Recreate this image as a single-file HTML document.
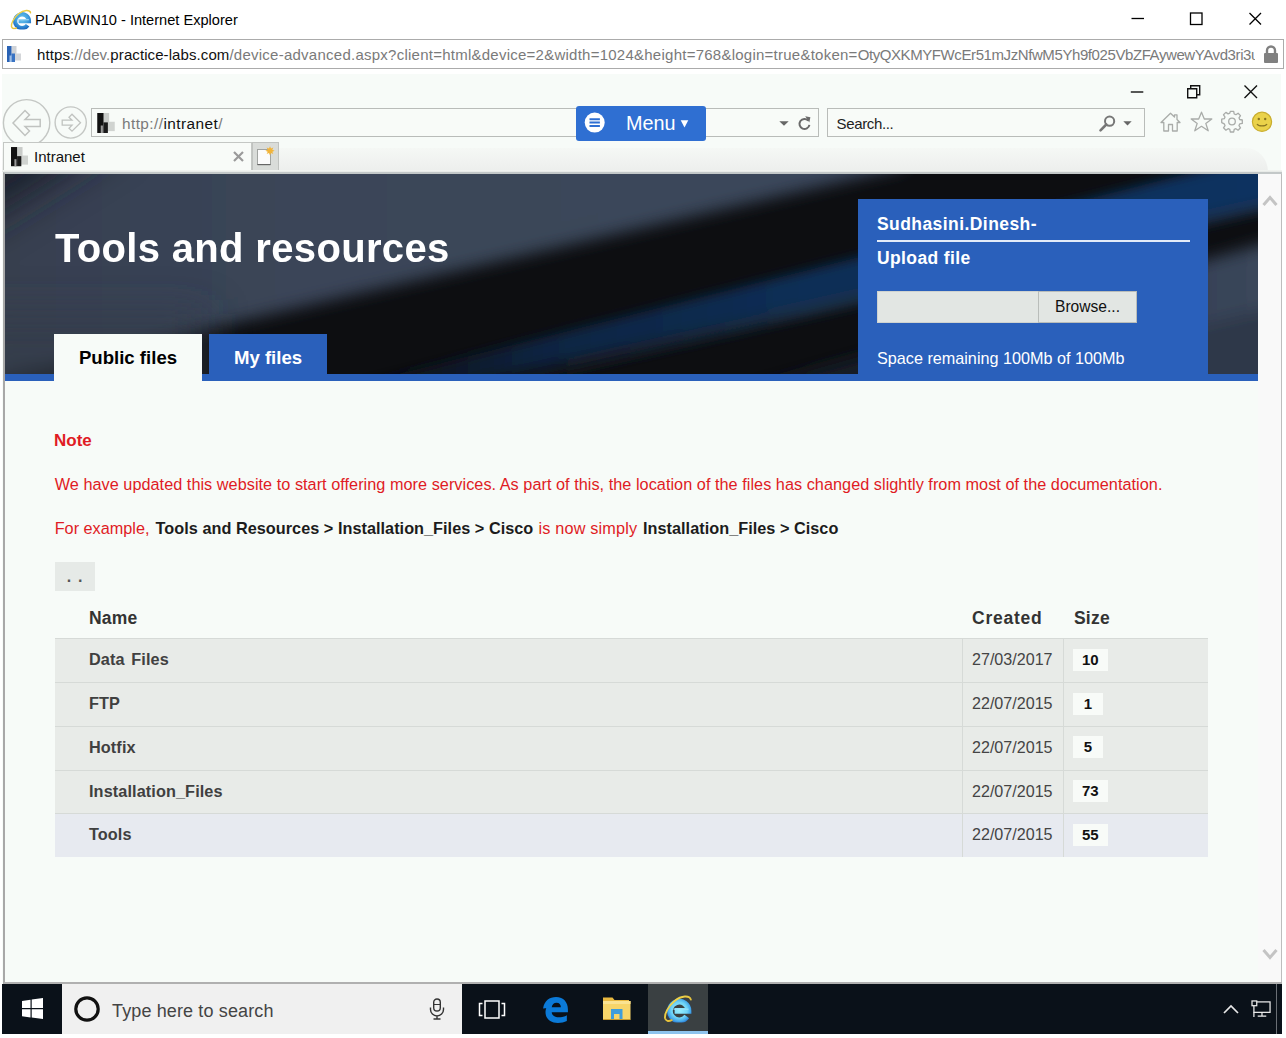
<!DOCTYPE html>
<html><head><meta charset="utf-8"><title>PLABWIN10 - Internet Explorer</title>
<style>
*{box-sizing:border-box;margin:0;padding:0}
html,body{width:1286px;height:1038px;overflow:hidden;background:#fff}
body{font-family:"Liberation Sans",sans-serif;position:relative}
.abs{position:absolute}
svg{position:absolute;overflow:visible}
/* outer window */
#otitle{left:35px;top:11px;font-size:14.6px;line-height:18px;color:#000;white-space:nowrap}
#oaddr{left:2px;top:39px;width:1282px;height:30px;border:1px solid #ababab;background:#fff}
#ourl{left:37px;top:45px;font-size:15px;line-height:20px;color:#7a7a7a;white-space:nowrap;width:1218px;overflow:hidden}
#ourl b{font-weight:normal;color:#111}
/* remote screen: origin (2,73) */
#rs{left:2px;top:73px;width:1280px;height:961px;background:#f7fbf8;overflow:hidden}
#tabrow{left:0;top:75px;width:1266px;height:24px;border-top-right-radius:22px 24px;background:linear-gradient(#f5f8f5 0%,#f1f3f1 50%,#eceeec 100%)}
#urlbox{left:89px;top:35px;width:728px;height:29px;border:1px solid #b9bcb9;background:#f8fbf8}
#urltxt{left:120px;top:41px;font-size:15.4px;letter-spacing:.42px;line-height:20px;color:#7a7a7a;white-space:nowrap}
#urltxt b{font-weight:normal;color:#111}
#menu{left:574px;top:33px;width:130px;height:35px;background:#2f6fd2;border-radius:3px;color:#fff;font-size:19.8px;line-height:34px;white-space:nowrap}
#searchbox{left:825px;top:35px;width:318px;height:29px;border:1px solid #b9bcb9;background:#f8fbf8}
#searchtxt{left:834.500px;top:41.300px;letter-spacing:-.35px;font-size:15px;line-height:20px;color:#222;white-space:nowrap}
#ietab{left:1px;top:69px;width:249px;height:28.500px;background:#f8fbf8;border:1px solid #c4c7c4;border-bottom:none}
#ietabtxt{left:32px;top:74px;font-size:15px;line-height:20px;color:#111;white-space:nowrap}
#newtab{left:249.500px;top:69px;width:27.500px;height:28px;background:#d9dcd9;border:1px solid #bfc2bf;border-bottom:none}
/* page: origin remote (2,99) => real (4,172) */
#page{left:1px;top:99px;width:1279px;height:812px;background:#f7fbf8;border-top:2px solid #c3c8c8;border-left:2px solid #a8a8a8;border-bottom:2px solid #b0b0b0}
#scroll{left:1253px;top:0;width:24px;height:808px;background:#f9f9f9;border-right:1.500px solid #bdbdbd}
#banner{left:0;top:0;width:1253px;height:207px;background:#0c0d10;overflow:hidden}
#bluestrip{left:0;top:200px;width:1253px;height:7px;background:#2a60bb}
#h1{left:50px;top:50.500px;font-size:40px;line-height:46px;font-weight:bold;color:#fff;white-space:nowrap;letter-spacing:.33px}
.tab{top:160px;height:40px;font-weight:bold;font-size:18.6px;text-align:center;line-height:48.6px;white-space:nowrap}
#tab1{left:49px;width:148px;height:47px;background:#f7fbf8;color:#000}
#tab2{left:204px;width:118px;background:#2a60bb;color:#fff}
#upl{left:853px;top:25px;width:350px;height:175px;background:#2a60bb;color:#fff}
#upl .u{position:absolute;left:19px;white-space:nowrap}
#uname{top:13.800px;font-size:17.5px;line-height:22px;font-weight:bold;letter-spacing:.43px}
#uhr{left:19px;top:40.900px;width:313px;height:1.700px;background:#e3ebf8}
#ufile{top:48.300px;font-size:17.5px;line-height:22px;font-weight:bold;letter-spacing:.38px}
#uinp{left:19px;top:92px;width:162px;height:32px;background:#e2e6e3;border:1px solid #cfd3d0}
#ubtn{left:180px;top:92px;width:99px;height:32px;background:#e2e6e3;border:1px solid #b9bdba;color:#111;font-size:15.6px;line-height:30px;text-align:center}
#uspace{top:149px;font-size:16.2px;line-height:20px}
.red{color:#e01b24}
.p{left:49px;font-size:16.25px;line-height:20px;white-space:nowrap}
.p b{color:#1c1c1c;font-size:16.25px}
#dots{left:49.600px;top:387.500px;width:40px;height:29px;background:#e6eae7;font-size:16px;font-weight:bold;color:#555;text-align:center;line-height:29px;letter-spacing:6.900px;padding-left:7px}
.th{top:432.600px;font-size:17.5px;line-height:22px;font-weight:bold;color:#333;white-space:nowrap;letter-spacing:.2px}
.row{left:49.500px;width:1153.500px;height:44.600px;overflow:hidden;background:#e8ebe8;border-top:1px solid #d6dad7}
.row.hl{background:#e7eaf0}
.row .n{position:absolute;left:34.500px;top:10px;font-size:16.25px;line-height:20px;font-weight:bold;color:#404040;white-space:nowrap;letter-spacing:.1px;word-spacing:2px}
.row .d{position:absolute;left:917.500px;top:10px;font-size:16.1px;line-height:20px;color:#444;white-space:nowrap}
.row .v1,.row .v2{position:absolute;left:907px;top:0;width:1px;height:44px;background:#d6dad7}
.row .v2{left:1008px}
.row .s{position:absolute;left:1018.500px;top:9.800px;height:22px;padding:0 9px;min-width:30px;text-align:center;background:#f8fbf8;font-size:15px;line-height:22px;font-weight:bold;color:#111}
#taskbar{left:0;top:911px;width:1280px;height:50px;background:#0a1119}
#tsearch{left:60px;top:0;width:400px;height:50px;background:#f0f0f0}
#tstxt{left:110px;top:15.500px;letter-spacing:.13px;font-size:18px;line-height:22px;color:#444;white-space:nowrap}
#ieact{left:646px;top:0;width:60px;height:50px;background:#3a4042;border-bottom:3px solid #8ec4ee}
</style></head><body>
<!-- outer IE title -->
<div class="abs" id="otitle">PLABWIN10 - Internet Explorer</div>
<div class="abs" id="oaddr"></div>
<div class="abs" id="ourl"><span style="letter-spacing:.09px"><b>https</b>://dev.<b>practice-labs.com</b></span><span style="letter-spacing:.247px">/device-advanced.aspx?client=html&amp;device=2&amp;width=1024&amp;height=768&amp;login=true&amp;token=</span><span style="letter-spacing:-.41px">OtyQXKMYFWcEr51mJzNfwM5Yh9f025VbZFAywewYAvd3ri3u</span></div>
<!--OUTERICONS--><svg width="0" height="0" style="position:absolute"><defs>
 <radialGradient id="ieb2" gradientUnits="userSpaceOnUse" cx="56" cy="50" r="48"><stop offset="0" stop-color="#6cc4ee"/><stop offset=".55" stop-color="#46a4e0"/><stop offset=".85" stop-color="#2c83d0"/><stop offset="1" stop-color="#1e6cc0"/></radialGradient><radialGradient id="ieb" gradientUnits="userSpaceOnUse" cx="56" cy="58" r="44"><stop offset="0" stop-color="#9af0ff"/><stop offset=".62" stop-color="#70d4f7"/><stop offset=".88" stop-color="#45a8ea"/><stop offset="1" stop-color="#2f84d8"/></radialGradient><linearGradient id="ieg" x1="0" y1="0" x2="1" y2="1"><stop offset="0" stop-color="#f6e35a"/><stop offset="1" stop-color="#d9a722"/></linearGradient>
 <symbol id="ielogo" viewBox="0 0 100 100">
  <path d="M40 61 H88 A32 32 0 1 0 82 80" fill="none" stroke="url(#ieb)" stroke-width="20"/>
  <path d="M36 55 H88" fill="none" stroke="#9fe3fb" stroke-width="5" opacity=".7"/>
  <path d="M96 22 C92 7 64 7 40 27 C18 45 5 70 7 86 C9 96 19 98 30 93" fill="none" stroke="url(#ieg)" stroke-width="6.500" stroke-linecap="round"/>
 </symbol>
 <symbol id="ielogo2" viewBox="0 0 100 100">
  <path d="M40 61 H88 A32 32 0 1 0 82 80" fill="none" stroke="url(#ieb2)" stroke-width="20"/>
  <path d="M36 55 H88" fill="none" stroke="#c9ecfb" stroke-width="5" opacity=".8"/>
  <path d="M96 22 C92 7 64 7 40 27 C18 45 5 70 7 86 C9 96 19 98 30 93" fill="none" stroke="url(#ieg)" stroke-width="6.500" stroke-linecap="round"/>
 </symbol>
 <symbol id="favblue" viewBox="0 0 14 16">
  <rect x="4.500" y="0" width="5" height="9" fill="#cfd2d6"/><rect x="8" y="7.500" width="6" height="7" fill="#d4d6d9"/>
  <rect x="0" y="0" width="4.500" height="16" fill="#2a63b5"/><rect x="4.500" y="7.500" width="3.500" height="8.500" fill="#3a74c4"/><rect x="2.500" y="9.500" width="2" height="6.500" fill="#9fc0e8"/>
 </symbol>
 <symbol id="favblk" viewBox="0 0 14 16">
  <rect x="4.500" y="0" width="5" height="9" fill="#c9ccc9"/><rect x="8" y="7" width="6" height="7.500" fill="#d0d3d0"/>
  <rect x="0" y="0" width="5" height="16" fill="#111"/><rect x="5" y="7.500" width="3.500" height="8.500" fill="#1a1a1a"/><rect x="2.800" y="10" width="1.700" height="6" fill="#9a9a9a"/>
 </symbol>
</defs></svg>
<svg style="left:9.500px;top:7.500px" width="21.500" height="21.500"><use href="#ielogo2" width="21.500" height="21.500"/></svg>
<svg style="left:7px;top:46px" width="14" height="16"><use href="#favblue" width="14" height="16"/></svg>
<svg style="left:1131px;top:12px" width="132" height="14" viewBox="0 0 132 14" fill="none" stroke="#000" stroke-width="1.300">
 <path d="M0.500 6.500H13"/><rect x="59.500" y="1" width="11.500" height="11.500"/><path d="M118.500 1L130 12.500M130 1L118.500 12.500"/>
</svg>
<svg style="left:1263px;top:45px" width="16" height="19" viewBox="0 0 16 19"><path d="M4 8V5.500a4 4 0 0 1 8 0V8" fill="none" stroke="#808080" stroke-width="2.400"/><rect x="1" y="8" width="14" height="10" rx="1" fill="#808080"/></svg>
<!--/OUTERICONS-->
<div class="abs" id="rs">
 <div class="abs" id="tabrow"></div><div class="abs" style="left:0;top:0;width:1280px;height:1px;background:#fff"></div><div class="abs" style="left:1278.500px;top:0;width:1.500px;height:99px;background:#fff"></div>
 <div class="abs" id="urlbox"></div>
 <div class="abs" id="urltxt"><span>http</span>://<b>intranet</b>/</div>
 <div class="abs" id="searchbox"></div>
 <div class="abs" id="searchtxt">Search...</div>
 <div class="abs" id="menu"><span style="position:absolute;left:50px">Menu</span></div>
 <div class="abs" id="ietab"></div>
 <div class="abs" id="ietabtxt">Intranet</div>
 <div class="abs" id="newtab"></div>
 <div class="abs" style="left:0;top:97px;width:1280px;height:2px;background:linear-gradient(#f5f7f3,#e4e7e4)"></div>
 <!--CHROMEICONS--><svg style="left:0;top:24px;overflow:hidden" width="90" height="45" viewBox="0 24 90 45" fill="none" stroke="#c4c7c4" stroke-width="1.400" stroke-linejoin="miter">
 <circle cx="24.600" cy="49.800" r="23.200"/>
 <path d="M11 50 L23 37.500 L27.500 42 L23 46.500 H38.200 V53.500 H23 L27.500 58 L23 62.500 Z" stroke="#c0c3c0" stroke-width="1.500"/>
 <circle cx="68.700" cy="49.500" r="15.600"/>
 <path d="M78.500 49.700 L70 41.200 L67 44.200 L70 47.200 H60.200 V52.200 H70 L67 55.200 L70 58.200 Z" stroke="#c0c3c0" stroke-width="1.300"/>
</svg>
<svg style="left:95px;top:40px" width="18" height="20"><use href="#favblk" width="18" height="20"/></svg>
<svg style="left:9px;top:74px" width="17" height="19.500"><use href="#favblk" width="17" height="19.500"/></svg>
<!-- menu icon -->
<svg style="left:582px;top:39px" width="22" height="22" viewBox="0 0 22 22"><circle cx="10.700" cy="10.600" r="10" fill="#fff"/><path d="M5.500 7.300h10.400M5.500 10.600h10.400M5.500 13.900h10.400" stroke="#2f6fd2" stroke-width="2"/></svg>
<svg style="left:678px;top:47px" width="9" height="8" viewBox="0 0 9 8"><path d="M0.700 0.300h7.600L4.500 7.500z" fill="#fff"/></svg>
<!-- url dropdown + refresh -->
<svg style="left:777px;top:48px" width="10" height="5" viewBox="0 0 10 5"><path d="M0.300 0.300h9.400L5 4.800z" fill="#666"/></svg>
<svg style="left:795px;top:43px" width="15" height="15" viewBox="0 0 15 15"><path d="M11.200 4.600A5 5 0 1 0 12.400 8.800" fill="none" stroke="#6a6a6a" stroke-width="2"/><path d="M8.200 0.300L13.400 1.200L12.300 6.600z" fill="#6a6a6a"/></svg>
<!-- search magnifier + arrow -->
<svg style="left:1097px;top:42px" width="17" height="17" viewBox="0 0 17 17"><circle cx="10.600" cy="6.200" r="4.600" fill="none" stroke="#777" stroke-width="2"/><path d="M7.300 9.500L1.500 15.300" stroke="#777" stroke-width="2.600" stroke-linecap="round"/></svg>
<svg style="left:1121px;top:48px" width="9" height="5" viewBox="0 0 9 5"><path d="M0.300 0.300h8.400L4.500 4.500z" fill="#666"/></svg>
<!-- home star gear smiley -->
<svg style="left:1158px;top:39px" width="21" height="20" viewBox="0 0 21 20" fill="none" stroke="#a9aca9" stroke-width="1.300" stroke-linejoin="round"><path d="M1 10.500L10.500 1.200L14.500 5V2.800H17V7.500L20 10.500H17.200V19H12.500V12.500H8.500V19H3.800V10.500Z"/></svg>
<svg style="left:1188px;top:38px" width="23" height="21" viewBox="0 0 23 21" fill="none" stroke="#a9aca9" stroke-width="1.300" stroke-linejoin="round"><path d="M11.500 1.200L14.300 8H21.800L15.800 12.400L18.200 19.800L11.500 15.300L4.800 19.800L7.200 12.400L1.200 8H8.700Z"/></svg>
<svg style="left:1219px;top:38px" width="22" height="21" viewBox="0 0 22 21" fill="none" stroke="#a9aca9" stroke-width="1.300" stroke-linejoin="round"><circle cx="11" cy="10.500" r="3.300"/><path d="M9.300 1h3.400l.5 2.600 1.700.7 2.200-1.500 2.400 2.400-1.500 2.200.7 1.700 2.600.5v3.400l-2.600.5-.7 1.700 1.500 2.200-2.400 2.400-2.200-1.500-1.700.7-.5 2.600H9.300l-.5-2.600-1.700-.7-2.200 1.500-2.400-2.400 1.500-2.200-.7-1.700L.7 12.200V8.800l2.600-.5.700-1.700L2.500 4.400l2.400-2.400 2.200 1.500 1.700-.7z" transform="translate(0,-.6)"/></svg>
<svg style="left:1249px;top:38px" width="22" height="22" viewBox="0 0 22 22"><circle cx="11" cy="10.800" r="9.600" fill="#ead24a" stroke="#c9ad2e" stroke-width="1.200"/><circle cx="7.800" cy="8" r="1.200" fill="#8a7620"/><circle cx="14.200" cy="8" r="1.200" fill="#8a7620"/><path d="M6 13c1.500 2.600 8.500 2.600 10 0" fill="none" stroke="#8a7620" stroke-width="1.300"/></svg>
<!-- inner window controls -->
<svg style="left:1128px;top:11px" width="130" height="15" viewBox="0 0 130 15" fill="none" stroke="#111" stroke-width="1.400"><path d="M0.800 8H13.300"/><path d="M57.700 4.700H66.700V13.700H57.700Z M60.700 4.700V1.700H69.700V10.700H66.700"/><path d="M114.500 1.500L127 14M127 1.500L114.500 14"/></svg>
<!-- tab close + new tab -->
<svg style="left:231px;top:78px" width="11" height="11" viewBox="0 0 11 11"><path d="M1 1L10 10M10 1L1 10" stroke="#9a9a9a" stroke-width="2.200"/></svg>
<svg style="left:254px;top:73px" width="20" height="20" viewBox="0 0 20 20"><rect x="1.500" y="3.600" width="13" height="15" fill="#fbfbfb" stroke="#8f928f" stroke-width=".8"/><path d="M1.500 18.600h13" stroke="#666" stroke-width="1.200"/><path d="M14 0.200l1 2.300 2.300-1 -1 2.300 2.300 1 -2.300 1 1 2.300 -2.300-1 -1 2.300 -1-2.300 -2.300 1 1-2.300 -2.300-1 2.300-1 -1-2.300 2.300 1z" fill="#f1b43a"/></svg>
<!--/CHROMEICONS-->
 <div class="abs" id="page">
  <div class="abs" id="banner">
   <!--BANNERBG--><svg class="abs" style="left:0;top:0" width="1253" height="207" viewBox="0 0 1253 207">
 <defs>
  <filter id="bl1" x="-20%" y="-50%" width="140%" height="200%"><feGaussianBlur stdDeviation="8"/></filter>
  <filter id="bl2" x="-20%" y="-50%" width="140%" height="200%"><feGaussianBlur stdDeviation="6"/></filter>
  <filter id="bl3" x="-20%" y="-50%" width="140%" height="200%"><feGaussianBlur stdDeviation="20"/></filter>
  <linearGradient id="slg" x1="0" y1="0" x2="1" y2="0"><stop offset="0" stop-color="#373f4f"/><stop offset=".35" stop-color="#3a4558"/><stop offset="1" stop-color="#3b475b"/></linearGradient>
  <linearGradient id="stk" gradientUnits="userSpaceOnUse" x1="300" y1="0" x2="1300" y2="0"><stop offset="0" stop-color="#0d0e11"/><stop offset=".1" stop-color="#0d111a"/><stop offset=".24" stop-color="#0d2442"/><stop offset=".5" stop-color="#0f2e56"/><stop offset="1" stop-color="#0e3361"/></linearGradient>
  <linearGradient id="stk2" gradientUnits="userSpaceOnUse" x1="300" y1="0" x2="1300" y2="0"><stop offset="0" stop-color="#0d0e11"/><stop offset=".15" stop-color="#0d0f13"/><stop offset=".5" stop-color="#1b3048"/><stop offset="1" stop-color="#1b3452"/></linearGradient>
  <linearGradient id="lrs" gradientUnits="userSpaceOnUse" x1="700" y1="0" x2="1250" y2="0"><stop offset="0" stop-color="#10141c"/><stop offset=".3" stop-color="#161d29"/><stop offset=".75" stop-color="#323d52"/><stop offset="1" stop-color="#3a465a"/></linearGradient>
 </defs>
 <rect width="1253" height="207" fill="#0d0e11"/>
 <!-- blue streak -->
 <g filter="url(#bl2)">
  <path d="M300 243 L1300 17 L1300 27 L300 258 Z" fill="url(#stk2)"/>
  <path d="M300 224 L1300 -30 L1300 17 L300 243 Z" fill="url(#stk)"/>
 </g>
 <!-- lower right slate band -->
 <g filter="url(#bl1)">
  <path d="M700 226 L1300 58 L1300 260 L700 260 Z" fill="url(#lrs)"/>
  <path d="M1000 200 L1300 125 L1300 260 L1000 260 Z" fill="#2e3848"/>
 </g>
 <!-- upper-left slate -->
 <g filter="url(#bl1)">
  <path d="M-40 -40 L900 -40 L900 -7 L-40 211 Z" fill="url(#slg)"/>
 </g>
 <g filter="url(#bl3)">
  <path d="M-40 -40 L120 -40 L-40 60 Z" fill="#1f242e"/>
  <path d="M-40 140 L200 140 L200 260 L-40 260 Z" fill="#333a49" opacity=".7"/>
 </g>
</svg>
<!--/BANNERBG-->
   <div class="abs" id="bluestrip"></div>
   <div class="abs" id="h1">Tools and resources</div>
   <div class="abs tab" id="tab1">Public files</div>
   <div class="abs tab" id="tab2">My files</div>
   <div class="abs" id="upl">
    <div class="u" id="uname">Sudhasini.Dinesh-</div>
    <div class="abs" id="uhr"></div>
    <div class="u" id="ufile">Upload file</div>
    <div class="abs" id="uinp"></div>
    <div class="abs" id="ubtn">Browse...</div>
    <div class="u" id="uspace">Space remaining 100Mb of 100Mb</div>
   </div>
  </div>
  <div class="abs p red" style="top:256.500px;left:49px;font-weight:bold;font-size:17px">Note</div>
  <div class="abs p red" style="top:300px;left:49.700px;letter-spacing:.035px">We have updated this website to start offering more services. As part of this, the location of the files has changed slightly from most of the documentation.</div>
  <div class="abs p red" style="top:344px;left:0"><span class="abs" style="left:49.700px">For example,</span><b class="abs" style="left:150.600px;letter-spacing:.03px">Tools and Resources &gt; Installation_Files &gt; Cisco</b><span class="abs" style="left:533.600px;letter-spacing:.15px">is now simply</span><b class="abs" style="left:638px;letter-spacing:.03px">Installation_Files &gt; Cisco</b></div>
  <div class="abs" id="dots">..</div>
  <div class="abs th" style="left:84px">Name</div>
  <div class="abs th" style="left:967px;letter-spacing:.75px">Created</div>
  <div class="abs th" style="left:1069px">Size</div>
  <div class="abs row" style="top:464.2px"><div class="n">Data Files</div><div class="v1"></div><div class="d">27/03/2017</div><div class="v2"></div><div class="s">10</div></div>
  <div class="abs row" style="top:508px"><div class="n">FTP</div><div class="v1"></div><div class="d">22/07/2015</div><div class="v2"></div><div class="s">1</div></div>
  <div class="abs row" style="top:551.7px"><div class="n">Hotfix</div><div class="v1"></div><div class="d">22/07/2015</div><div class="v2"></div><div class="s">5</div></div>
  <div class="abs row" style="top:595.5px"><div class="n">Installation_Files</div><div class="v1"></div><div class="d">22/07/2015</div><div class="v2"></div><div class="s">73</div></div>
  <div class="abs row hl" style="top:639.2px;height:43.500px"><div class="n">Tools</div><div class="v1"></div><div class="d">22/07/2015</div><div class="v2"></div><div class="s">55</div></div>
  <div class="abs" id="scroll"><svg style="left:4px;top:20px" width="16" height="13" viewBox="0 0 16 13"><path d="M1.500 11L8 3.500L14.500 11" fill="none" stroke="#c4c4c4" stroke-width="3"/></svg><svg style="left:4px;top:774px" width="16" height="13" viewBox="0 0 16 13"><path d="M1.500 2L8 9.500L14.500 2" fill="none" stroke="#c4c4c4" stroke-width="3"/></svg></div>
 </div>
 <div class="abs" id="taskbar">
  <div class="abs" id="tsearch"></div>
  <div class="abs" id="tstxt">Type here to search</div>
  <div class="abs" id="ieact"></div>
  <!--TASKICONS--><!-- windows logo -->
<svg style="left:20px;top:14px" width="21" height="21" viewBox="0 0 21 21" fill="#fff"><path d="M0 3L8.500 1.800V10H0Z M9.700 1.600L21 0V10H9.700Z M0 11.200H8.500V19.400L0 18.200Z M9.700 11.200H21V21L9.700 19.500Z"/></svg>
<!-- cortana -->
<svg style="left:71px;top:11px" width="28" height="28" viewBox="0 0 28 28"><circle cx="14" cy="14" r="11.200" fill="none" stroke="#111" stroke-width="3.200"/></svg>
<!-- mic -->
<svg style="left:427px;top:14px" width="16" height="22" viewBox="0 0 16 22" fill="none" stroke="#333" stroke-width="1.400"><rect x="4.700" y="1" width="6.600" height="12" rx="3.300"/><path d="M1.500 9.500v2a6.500 6.500 0 0 0 13 0v-2M8 18v3M4.500 21h7"/><path d="M5 6.500h6" stroke-width="1"/></svg>
<!-- task view -->
<svg style="left:476px;top:16px" width="28" height="19" viewBox="0 0 28 19" fill="none" stroke="#fff" stroke-width="1.500"><rect x="7" y="1" width="14" height="17"/><path d="M4.500 3.500H1.500V15.500H4.500M23.500 3.500H26.500V15.500H23.500"/></svg>
<!-- edge -->
<svg style="left:540px;top:12px" width="27" height="27" viewBox="0 0 100 100"><path d="M4 46C8 18 28 4 52 4c28 0 44 20 44 46v10H36c1 12 12 19 26 19 12 0 22-3 30-8v22c-9 5-21 7-33 7-30 0-46-18-46-40 0-16 9-28 22-35-8 5-12 12-14 19zM36 42h34c0-10-6-17-16-17s-17 7-18 17z" fill="#0b7ad8"/></svg>
<!-- folder -->
<svg style="left:600px;top:11px" width="30" height="26" viewBox="0 0 30 26"><path d="M1 2.500h9.500l2 2.500H27v3H1z" fill="#e9b940"/><rect x="1" y="6" width="27.500" height="18.500" fill="#f7d56a"/><path d="M1 6h27.500v3H1z" fill="#fbe391"/><rect x="9" y="14" width="11.500" height="10.500" fill="#3f9ddb"/><rect x="12" y="19" width="5.500" height="5.500" fill="#f7d56a"/><path d="M1 24.500h27.500" stroke="#c99a2e" stroke-width="1"/></svg>
<!-- ie -->
<svg style="left:661px;top:9.400px" width="29" height="29.500"><use href="#ielogo" width="29" height="29.500"/></svg>
<!-- tray -->
<svg style="left:1221px;top:19.500px" width="16" height="10" viewBox="0 0 16 10"><path d="M1 9L8 2L15 9" fill="none" stroke="#e8e8e8" stroke-width="1.700"/></svg>
<svg style="left:1249px;top:16px" width="21" height="19" viewBox="0 0 22 20" fill="none" stroke="#eee" stroke-width="1.300"><rect x="3" y="2" width="17" height="11"/><path d="M11.500 13v4M7 17h9"/><rect x="1" y="1" width="5" height="5" fill="#0a1119"/><path d="M3 13v5" /></svg>
<div class="abs" style="left:1274px;top:0;width:1px;height:50px;background:#6a6f75"></div>
<!--/TASKICONS-->
 </div>
</div>
</body></html>
